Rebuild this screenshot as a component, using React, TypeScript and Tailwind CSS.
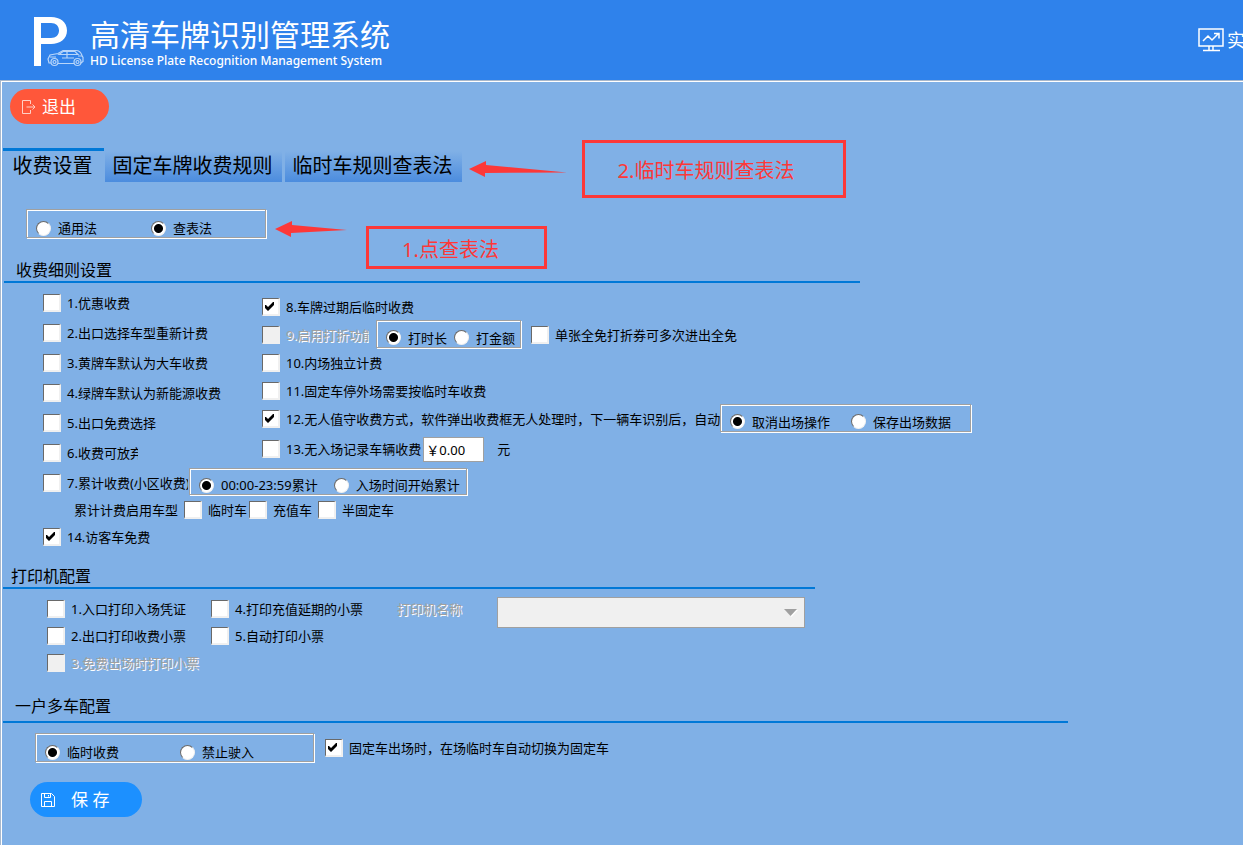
import React, { useState } from 'react';

const CJK = "font-['Noto_Sans','Noto_Sans_CJK_SC',sans-serif]";

const BOX =
  'border border-[#a0a0a0] shadow-[1px_1px_0_#fff,inset_1px_1px_0_#fff] flex min-w-0 items-end';

function Check({
  label,
  checked = false,
  disabled = false,
  clip = '',
}: {
  label: string;
  checked?: boolean;
  disabled?: boolean;
  clip?: string;
}) {
  const [on, setOn] = useState(checked);
  return (
    <label className="flex items-center gap-[6px] whitespace-nowrap">
      <span className="relative flex h-[18px] w-[18px] shrink-0">
        <input
          type="checkbox"
          checked={on}
          disabled={disabled}
          onChange={() => setOn(!on)}
          className="h-[18px] w-[18px] appearance-none border-t border-r-2 border-b-2 border-l border-t-[#696969] border-r-[#f0f0f0] border-b-[#f0f0f0] border-l-[#696969] bg-white disabled:bg-[#f0f0f0]"
        />
        {on && (
          <svg viewBox="0 0 18 18" className="pointer-events-none absolute inset-0 h-[18px] w-[18px]">
            <path d="M3 7v3l3 3 6-6V4h-1L6 9 4 7z" fill="#000" />
          </svg>
        )}
      </span>
      <span className={`${clip} ${disabled ? 'text-[#a0a0a0] [text-shadow:1px_1px_0_#fff]' : ''}`}>
        {label}
      </span>
    </label>
  );
}

function Radio({ name, label, checked = false }: { name: string; label: string; checked?: boolean }) {
  return (
    <label className="flex items-center gap-[7px] whitespace-nowrap">
      <input
        type="radio"
        name={name}
        defaultChecked={checked}
        className="h-[15px] w-[15px] shrink-0 appearance-none rounded-full border border-t-[#696969] border-r-[#f0f0f0] border-b-[#f0f0f0] border-l-[#696969] bg-white checked:bg-[radial-gradient(circle,#000_4px,#fff_5px)]"
      />
      <span>{label}</span>
    </label>
  );
}

function Title({ children, size }: { children: string; size: string }) {
  return (
    <h2 className={`max-w-full border-b-2 border-[#0078d7] text-[16px] leading-[26px] ${size}`}>
      {children}
    </h2>
  );
}

function Logo() {
  return (
    <svg viewBox="0 0 54 52" className="h-[52px] w-[54px] shrink-0" fill="none">
      <path
        fillRule="evenodd"
        fill="#fff"
        d="M2 1h17c9 0 16 5 16 13.500S28 28 19 28H9v22H2zM9 7v15h10c5 0 8-3 8-7.500S24 7 19 7z"
      />
      <g stroke="#b8d6fa" strokeWidth="1.200">
        <path d="M19 47h-2l-1-4 2-4 8-1.500 5-3h13c4 0 5 2 6 5l1 2v4l-2 1.500h-1M26 47.500h16" />
        <path d="M27 38.500l4-3h12l3 3zM35 35.500v6M18 41h6M46 40h4M30 42h12" />
        <circle cx="22.500" cy="46" r="3.500" />
        <circle cx="22.500" cy="46" r="1.500" />
        <circle cx="45.500" cy="46" r="3.500" />
        <circle cx="45.500" cy="46" r="1.500" />
      </g>
    </svg>
  );
}

export default function App() {
  return (
    <div className={`flex min-h-screen flex-col overflow-x-hidden bg-[#80b0e6] text-[13px] leading-[18px] text-black ${CJK}`}>
      <header className="flex h-20 items-center justify-between overflow-hidden bg-[#2f82eb] text-white">
        <div className="flex self-start pt-4 pl-8">
          <Logo />
          <div className="pl-1">
            <h1 className="pt-px text-[30px] leading-[36px] whitespace-nowrap">高清车牌识别管理系统</h1>
            <p className="text-[12px] leading-[16px] font-medium whitespace-nowrap">HD License Plate Recognition Management System</p>
          </div>
        </div>
        <a href="#live" className="flex w-[45px] items-center gap-[3px] overflow-hidden text-[18px] whitespace-nowrap">
          <svg viewBox="0 0 26 24" className="h-6 w-[26px] shrink-0" fill="none" stroke="#fff" strokeWidth="1.500">
            <path d="M1 1h24v17H1zM11 18v4M15 18v4M5 22.500h17M5 13l5-5 4 4 6-6M16 5.500h5v5" />
          </svg>
          <span className="shrink-0">实</span>
        </a>
      </header>

      <main className="relative flex-1 border-t border-l border-[#a8b8cc] pb-7 shadow-[inset_1px_1px_0_#fff]">
        <div className="px-[9px] pt-2">
          <button className="flex h-[35px] w-[99px] items-center gap-[6px] rounded-full bg-[#ff573a] pl-3 text-[17px] text-white">
            <svg viewBox="0 0 14 14" className="h-[14px] w-[14px]" fill="none" stroke="#ffd0c6">
              <path d="M8.500 4V.500h-8v13h8V10M4.500 7h8M10.500 4.500L13 7l-2.500 2.500" />
            </svg>
            退出
          </button>
        </div>

        <nav className="mt-6 flex items-end pl-[2px] text-[20px]">
          <button className="h-[34px] w-[101px] border-t-3 border-[#0078d7] pr-[2px] pb-[2px] text-center">收费设置</button>
          <button className="ml-px h-[31px] w-[177px] bg-linear-to-b from-[#80b0e6] to-[#4b8cde] pr-[2px] pb-[2px]">固定车牌收费规则</button>
          <button className="ml-[3px] h-[31px] w-[177px] bg-linear-to-b from-[#80b0e6] to-[#4b8cde] pr-[2px] pb-[2px]">临时车规则查表法</button>
        </nav>

        <div className={`${BOX} mt-[27px] ml-[25px] h-[29px] w-[240px] gap-[54px] pl-[9px]`}>
          <Radio name="method" label="通用法" />
          <Radio name="method" label="查表法" checked />
        </div>

        <section className="mt-[19px] ml-[3px]">
          <Title size="h-[26px] w-[856px] pl-3">收费细则设置</Title>
          <div className="flex pt-[11px] pl-[39px]">
            <div className="flex w-[219px] shrink-0 flex-col gap-3">
              <Check label="1.优惠收费" />
              <Check label="2.出口选择车型重新计费" />
              <Check label="3.黄牌车默认为大车收费" />
              <Check label="4.绿牌车默认为新能源收费" />
              <Check label="5.出口免费选择" />
              <Check label="6.收费可放弃" clip="w-[71px] overflow-hidden" />
              <div className="flex h-[18px] items-center">
                <Check label="7.累计收费(小区收费)" clip="w-[121px] overflow-hidden" />
                <div className={`${BOX} mb-[3px] ml-px h-[27px] w-[278px] shrink-0 gap-4 pl-[9px]`}>
                  <Radio name="period" label="00:00-23:59累计" checked />
                  <Radio name="period" label="入场时间开始累计" />
                </div>
              </div>
            </div>
            <div className="flex flex-col gap-[10px] pt-1">
              <Check label="8.车牌过期后临时收费" checked />
              <div className="flex h-[18px] items-center">
                <Check label="9.启用打折功能" disabled clip="w-[83px] overflow-hidden" />
                <div className={`${BOX} mb-[3px] ml-[7px] h-[28px] w-[145px] shrink-0 gap-[7px] pl-[9px]`}>
                  <Radio name="discount" label="打时长" checked />
                  <Radio name="discount" label="打金额" />
                </div>
                <div className="ml-[10px]">
                  <Check label="单张全免打折券可多次进出全免" />
                </div>
              </div>
              <Check label="10.内场独立计费" />
              <Check label="11.固定车停外场需要按临时车收费" />
              <div className="flex h-[18px] items-center">
                <Check
                  label="12.无人值守收费方式，软件弹出收费框无人处理时，下一辆车识别后，自动"
                  checked
                  clip="w-[434px]"
                />
                <div className={`${BOX} mb-[3px] h-[28px] w-[251px] shrink-0 gap-[21px] pl-[9px]`}>
                  <Radio name="unattended" label="取消出场操作" checked />
                  <Radio name="unattended" label="保存出场数据" />
                </div>
              </div>
              <div className="flex h-[22px] items-center">
                <Check label="13.无入场记录车辆收费" />
                <input
                  type="text"
                  aria-label="无入场记录车辆收费金额"
                  defaultValue="￥0.00"
                  className="ml-[2px] h-[25px] w-[61px] border border-[#a0a0a0] bg-white px-[2px]"
                />
                <span className="ml-[13px]">元</span>
              </div>
            </div>
          </div>
          <div className="flex items-center pt-[9px] pl-[70px]">
            <span className="mr-[6px]">累计计费启用车型</span>
            <div className="flex gap-[2px]">
              <Check label="临时车" />
              <Check label="充值车" />
              <div className="pl-1">
                <Check label="半固定车" />
              </div>
            </div>
          </div>
          <div className="pt-[9px] pl-[39px]">
            <Check label="14.访客车免费" checked />
          </div>
        </section>

        <section className="mt-[17px] ml-[2px]">
          <Title size="h-[26px] w-[812px] pl-2">打印机配置</Title>
          <div className="flex pt-2 pl-[44px]">
            <div className="flex w-[164px] shrink-0 flex-col gap-[9px] pt-[3px]">
              <Check label="1.入口打印入场凭证" />
              <Check label="2.出口打印收费小票" />
              <Check label="3.免费出场时打印小票" disabled />
            </div>
            <div className="flex w-[186px] shrink-0 flex-col gap-[9px] pt-[3px]">
              <Check label="4.打印充值延期的小票" />
              <Check label="5.自动打印小票" />
            </div>
            <label htmlFor="printer" className="w-[100px] pt-[3px] text-[#a0a0a0] [text-shadow:1px_1px_0_#fff]">
              打印机名称
            </label>
            <div className="relative h-[31px] w-[308px]">
              <select
                id="printer"
                disabled
                className="h-full w-full appearance-none border border-[#a0a0a0] bg-[#f0f0f0] opacity-100"
              />
              <svg viewBox="0 0 14 8" className="pointer-events-none absolute top-3 right-[7px] h-2 w-[14px]">
                <path d="M1 1h13L7.500 8z" fill="#fff" />
                <path d="M0 0h13L6.500 7z" fill="#a0a0a0" />
              </svg>
            </div>
          </div>
        </section>

        <section className="mt-[21px] ml-[2px]">
          <Title size="h-[30px] w-[1065px] pl-3">一户多车配置</Title>
          <div className="flex items-center pt-[10px] pl-[32px]">
            <div className={`${BOX} mr-[11px] h-[29px] w-[279px] gap-[61px] pl-[9px]`}>
              <Radio name="multi" label="临时收费" checked />
              <Radio name="multi" label="禁止驶入" />
            </div>
            <Check label="固定车出场时，在场临时车自动切换为固定车" checked />
          </div>
        </section>

        <div className="mt-5 pl-[29px]">
          <button className="flex h-[35px] w-[112px] items-center gap-4 rounded-full bg-[#1c90ff] pl-[11px] text-[17px] text-white">
            <svg viewBox="0 0 14 14" className="h-[14px] w-[14px]" fill="none" stroke="#fff">
              <path d="M.500.500h10l3 3v10H.500zM3.500.500v4h6v-4M3.500 13.500v-5h7v5M7.500 2v1.500" />
            </svg>
            保 存
          </button>
        </div>

        <div className="absolute top-[59px] left-[581px] flex h-[58px] w-[264px] items-center justify-center border-3 border-[#fd3838] pt-1 pr-4 text-[20px] text-[#fd3838]">
          2.临时车规则查表法
        </div>
        <div className="absolute top-[145px] left-[365px] flex h-[43px] w-[181px] items-center justify-center border-3 border-[#fd3838] pt-1 pr-3 text-[20px] text-[#fd3838]">
          1.点查表法
        </div>
        <svg viewBox="0 0 98 18" className="absolute top-[79px] left-[468px] h-[18px] w-[98px]">
          <path d="M0 9L17 1v4l81 7.500-82 .500v4z" fill="#fd3838" />
        </svg>
        <svg viewBox="0 0 72 18" className="absolute top-[139px] left-[274px] h-[18px] w-[72px]">
          <path d="M0 9L17 1v4l55 5-56 3v4z" fill="#fd3838" />
        </svg>
      </main>
    </div>
  );
}
